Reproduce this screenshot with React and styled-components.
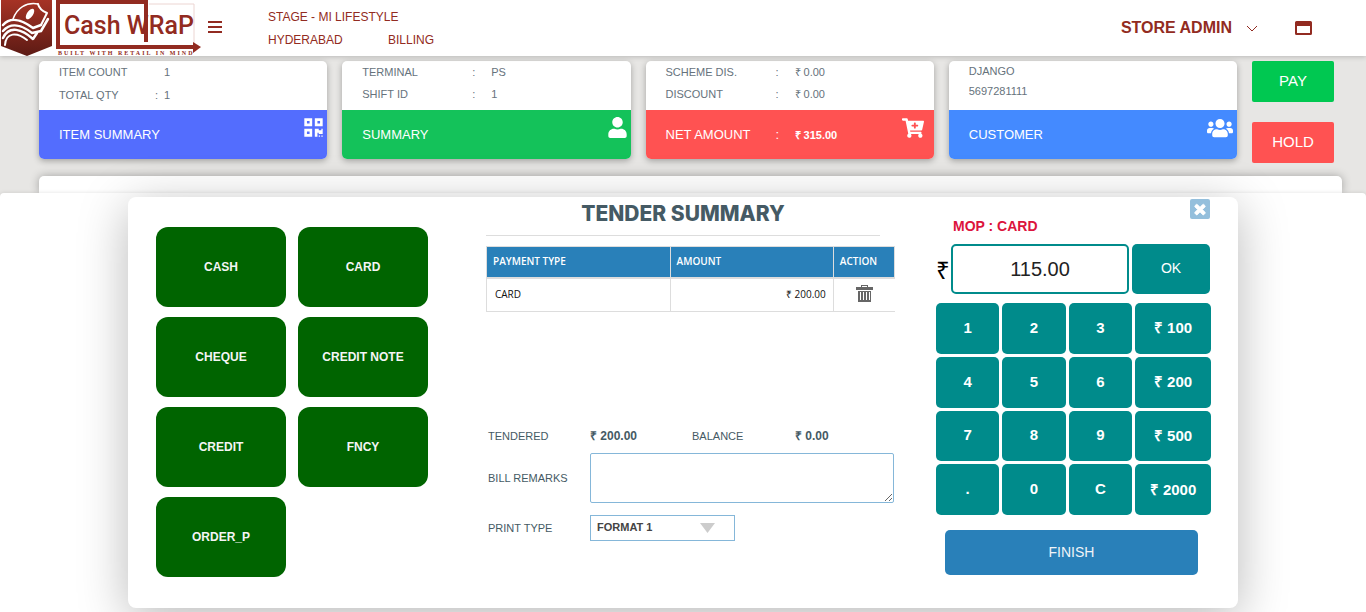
import React, { useState } from "react";
import styled, { createGlobalStyle } from "styled-components";
import { FaQrcode, FaUser, FaCartPlus, FaUsers } from "react-icons/fa";

const sans = `"Liberation Sans", Arial, sans-serif`;
const brand = "#922b21";
const teal = "#008b8b";
const blue = "#2980b9";
const slate = "#455a64";

const GlobalStyle = createGlobalStyle`
  * { box-sizing: border-box; }
  body { margin: 0; background: #e7e6e4; font-family: ${sans}; }
  button, input, select, textarea { font-family: inherit; margin: 0; }
  button { border: 0; padding: 0; cursor: pointer; }
`;

const Page = styled.div`
  overflow: hidden;
`;

const Header = styled.header`
  position: relative;
  z-index: 1;
  display: flex;
  align-items: center;
  height: 56px;
  padding-right: 54px;
  background: #fff;
  color: ${brand};
  box-shadow: 0 1px 5px rgba(0, 0, 0, 0.2);
`;

const Logo = styled.svg`
  display: block;
  flex: none;
`;

const IconButton = styled.button`
  display: flex;
  background: none;
  color: inherit;
`;

const StoreInfo = styled.div`
  display: grid;
  grid-template-columns: 120px auto;
  margin: 0 auto 0 46px;
  padding-top: 2px;
  font-size: 12px;
  line-height: 23px;
`;

const StoreName = styled.span`
  grid-column: 1 / -1;
`;

const UserMenu = styled.button`
  display: flex;
  align-items: center;
  gap: 14px;
  margin-right: 37px;
  background: none;
  color: inherit;
  font-size: 16px;
  font-weight: 700;
`;

const Dashboard = styled.section`
  display: flex;
  gap: 15px;
  padding: 5px 32px 0 39px;
`;

const Cards = styled.div`
  flex: 1;
  display: grid;
  grid-template-columns: repeat(4, 1fr);
  align-items: start;
  gap: 15px;
`;

const Card = styled.article`
  border-radius: 5px;
  overflow: hidden;
  background: #fff;
  box-shadow: 0 2px 6px rgba(0, 0, 0, 0.3);
`;

const CardBody = styled.div`
  height: 49px;
  padding-left: 20px;
  color: #66727c;
  font-size: 11px;
  line-height: ${(p) => p.$line}px;
`;

const CardRow = styled.div`
  display: grid;
  grid-template-columns: ${(p) => (p.$compact ? "96px 9px auto" : "110px 19px auto")};
`;

const CardFooter = styled.div`
  display: flex;
  justify-content: space-between;
  height: 49px;
  padding: 7px ${(p) => p.$inset}px 0 20px;
  background: ${(p) => p.$color};
  color: #fff;
  font-size: 13px;
  line-height: 36px;
`;

const NetValue = styled.strong`
  font-size: 11px;
`;

const SideActions = styled.div`
  display: flex;
  flex-direction: column;
  gap: 20px;
  width: 82px;
`;

const SideButton = styled.button`
  height: 41px;
  padding-bottom: 2px;
  border-radius: 2px;
  background: ${(p) => p.$color};
  color: #fff;
  font-size: 15px;
`;

const Panel = styled.div`
  height: 17px;
  margin: 13px 24px 0 39px;
  border-radius: 5px 5px 0 0;
  background: #fff;
  box-shadow: 0 0 10px rgba(0, 0, 0, 0.3);
`;

const Sheet = styled.main`
  position: relative;
  padding: 4px 128px;
  border-radius: 4px 4px 0 0;
  background: #fff;
  box-shadow: 0 0 4px rgba(0, 0, 0, 0.12);
`;

const Modal = styled.section`
  display: grid;
  grid-template-columns: 272px minmax(409px, 1fr) 275px;
  padding: 0 27px 31px 28px;
  border-radius: 8px;
  background: #fff;
  box-shadow: 0 10px 50px rgba(0, 0, 0, 0.28);
`;

const Methods = styled.div`
  display: grid;
  grid-template-columns: 1fr 1fr;
  grid-auto-rows: 80px;
  gap: 10px 12px;
  padding-top: 30px;
`;

const MethodButton = styled.button`
  border-radius: 12px;
  background: #006400;
  color: #f5f5f5;
  font-size: 12px;
  font-weight: 700;
`;

const Summary = styled.div`
  margin: 0 41px 0 58px;
`;

const Title = styled.h1`
  margin: 0 15px 10px 0;
  padding-bottom: 4px;
  border-bottom: 1px solid #ddd;
  color: ${slate};
  font-family: Inter, ${sans};
  font-size: 21px;
  font-weight: 800;
  line-height: 34px;
  text-align: center;
`;

const TenderArea = styled.div`
  min-height: 180px;
`;

const TenderTable = styled.table`
  width: 100%;
  border-collapse: collapse;
  table-layout: fixed;
  font-family: "Open Sans", ${sans};
  font-size: 10px;
  color: #111;
`;

const HeadCell = styled.th`
  width: ${(p) => p.$width};
  height: 31px;
  padding: 0 6px 2px;
  border: 1px solid #ddd;
  border-bottom-width: 2px;
  background: ${blue};
  color: #fff;
  font-weight: 600;
  text-align: left;
`;

const Cell = styled.td`
  height: 34px;
  padding: 0 7px 2px 8px;
  border: solid #ddd;
  border-width: 0 0 1px 1px;
  text-align: ${(p) => p.$align || "left"};
`;

const DeleteButton = styled(IconButton)`
  margin: 0 auto;
  color: #666;
`;

const Fields = styled.div`
  display: grid;
  grid-template-columns: 102px 102px 103px 1fr;
  align-items: center;
  padding: 0 1px 0 2px;
  color: ${slate};
  font-size: 11px;
  line-height: 20px;
`;

const Amount = styled.strong`
  font-size: 12px;
`;

const FieldLabel = styled.label`
  padding-top: ${(p) => p.$gap}px;
`;

const Wide = styled.div`
  grid-column: 2 / -1;
  display: flex;
  padding-top: ${(p) => p.$gap}px;
`;

const Remarks = styled.textarea`
  width: 100%;
  height: 50px;
  border: 1px solid #85b7d9;
  border-radius: 2px;
`;

const SelectBox = styled.div`
  position: relative;
  width: 145px;
`;

const Select = styled.select`
  appearance: none;
  display: block;
  width: 100%;
  height: 26px;
  padding: 0 6px 2px;
  border: 1px solid #85b7d9;
  border-radius: 0;
  background: #fff;
  color: #444;
  font-size: 11px;
  font-weight: 700;
`;

const SelectArrow = styled.svg`
  position: absolute;
  top: 8px;
  right: 20px;
  pointer-events: none;
`;

const Pad = styled.div`
  display: flex;
  flex-direction: column;
`;

const CloseButton = styled.button`
  display: grid;
  place-items: center;
  align-self: flex-end;
  width: 20px;
  height: 20px;
  margin: 2px 1px 0 0;
  border-radius: 2px;
  background: #94bfdc;
  color: #fff;
`;

const Mop = styled.label`
  margin: 0 0 11px 17px;
  color: #dc143c;
  font-size: 14px;
  font-weight: 700;
  line-height: 14px;
`;

const Entry = styled.div`
  display: grid;
  grid-template-columns: 15px 1fr 78px;
  align-items: center;
  height: 50px;
  margin-right: 1px;
`;

const Rupee = styled.span`
  font-size: 24px;
`;

const AmountInput = styled.input`
  width: 100%;
  height: 50px;
  border: 2px solid ${teal};
  border-radius: 5px;
  color: #222;
  font-size: 20px;
  text-align: center;
`;

const EntryField = styled.div`
  padding-right: 3px;
`;

const KeyButton = styled.button`
  padding-bottom: 2px;
  border-radius: 5px;
  background: ${teal};
  color: #fff;
  font-size: 15px;
  font-weight: 700;
`;

const OkButton = styled(KeyButton)`
  height: 50px;
  font-size: 14px;
  font-weight: 400;
`;

const Keypad = styled.div`
  display: grid;
  grid-template-columns: 5fr 5fr 5fr 6fr;
  grid-template-rows: repeat(4, 1fr);
  gap: 3px;
  height: 212px;
  margin: 9px 0 15px;
`;

const FinishButton = styled.button`
  height: 45px;
  padding-bottom: 2px;
  margin: 0 13px 0 9px;
  border-radius: 5px;
  background: ${blue};
  color: #f0f4f8;
  font-size: 14px;
`;

const methods = ["CASH", "CARD", "CHEQUE", "CREDIT NOTE", "CREDIT", "FNCY", "ORDER_P"];
const keys = ["1", "2", "3", "₹ 100", "4", "5", "6", "₹ 200", "7", "8", "9", "₹ 500", ".", "0", "C", "₹ 2000"];

function BrandLogo() {
  return (
    <Logo width="204" height="56" viewBox="0 0 204 56" role="img" aria-label="Cash Wrap">
      <defs>
        <linearGradient id="shield" x1="0" y1="0" x2="0" y2="1">
          <stop offset="0" stopColor="#a63325" />
          <stop offset="1" stopColor="#5c1a14" />
        </linearGradient>
      </defs>
      <path d="M1 0h51v46L27 56 1 46z" fill="url(#shield)" />
      <g fill="none" stroke="#fff" strokeLinecap="round" strokeLinejoin="round">
        <path d="M13 19C17 8 26 2 38 4" strokeWidth="1.500" />
        <path d="M38 4c1 4 4 7 9 9l-6 12" strokeWidth="2" />
        <path d="M3 25c7-8 18-6 30 3l8-3" strokeWidth="2.500" />
        <path d="M3 31c8-9 19-6 29 2l9-2 7-12" strokeWidth="2.500" />
        <path d="M3 38c6-13 19-9 30 1l4-6" strokeWidth="2.500" />
        <path d="M5 45c1-13 12-13 22-5" strokeWidth="2" />
      </g>
      <ellipse cx="30" cy="14" rx="3" ry="6" fill="#fff" transform="rotate(35 30 14)" />
      <path d="M149 4h45v39" fill="none" stroke="#ecd5d2" />
      <path d="M146 42V2H58v45h136" fill="none" stroke={brand} strokeWidth="4" />
      <path d="M193 42l8 5-8 6z" fill={brand} />
      <text x="64" y="34" fontFamily='Roboto, "Liberation Sans", sans-serif' fontSize="25" fontWeight="500" fill={brand}>
        Cash WRaP
      </text>
      <text x="58" y="55" fontFamily='"Liberation Serif", serif' fontSize="6" fontWeight="700" letterSpacing="2" fill={brand}>
        BUILT WITH RETAIL IN MIND
      </text>
    </Logo>
  );
}

function Row({ label, value, colon = ":", compact }) {
  return (
    <CardRow $compact={compact}>
      <span>{label}</span>
      <span>{colon}</span>
      <span>{value}</span>
    </CardRow>
  );
}

export default function App() {
  const [amount, setAmount] = useState("115.00");
  const [remarks, setRemarks] = useState("");

  return (
    <Page>
      <GlobalStyle />
      <Header>
        <BrandLogo />
        <IconButton aria-label="Menu">
          <svg width="18" height="14" viewBox="0 0 18 14" fill="currentColor">
            <path d="M4 0h14v2H4zM4 5h14v2H4zM4 10h14v2H4z" />
          </svg>
        </IconButton>
        <StoreInfo>
          <StoreName>STAGE - MI LIFESTYLE</StoreName>
          <span>HYDERABAD</span>
          <span>BILLING</span>
        </StoreInfo>
        <UserMenu>
          STORE ADMIN
          <svg width="12" height="8" viewBox="0 0 12 8" fill="none" stroke="currentColor">
            <path d="M1 2l5 5 5-5" />
          </svg>
        </UserMenu>
        <IconButton aria-label="Window">
          <svg width="17" height="14" viewBox="0 0 17 14" fill="currentColor" fillRule="evenodd">
            <path d="M1.500 0h14a1.500 1.500 0 0 1 1.500 1.500v11a1.500 1.500 0 0 1-1.500 1.500h-14A1.500 1.500 0 0 1 0 12.500v-11A1.500 1.500 0 0 1 1.500 0zM2 5v7h13V5z" />
          </svg>
        </IconButton>
      </Header>

      <Dashboard>
        <Cards>
          <Card>
            <CardBody $line={23}>
              <Row label="ITEM COUNT" colon="" value="1" compact />
              <Row label="TOTAL QTY" value="1" compact />
            </CardBody>
            <CardFooter $color="#536dfe" $inset={3}>
              ITEM SUMMARY
              <FaQrcode size={21} />
            </CardFooter>
          </Card>
          <Card>
            <CardBody $line={22}>
              <Row label="TERMINAL" value="PS" />
              <Row label="SHIFT ID" value="1" />
            </CardBody>
            <CardFooter $color="#14c25a" $inset={3}>
              SUMMARY
              <FaUser size={21} />
            </CardFooter>
          </Card>
          <Card>
            <CardBody $line={22}>
              <Row label="SCHEME DIS." value="₹ 0.00" />
              <Row label="DISCOUNT" value="₹ 0.00" />
            </CardBody>
            <CardFooter $color="#ff5252" $inset={10}>
              <Row label="NET AMOUNT" value={<NetValue>₹ 315.00</NetValue>} />
              <FaCartPlus size={22} />
            </CardFooter>
          </Card>
          <Card>
            <CardBody $line={20}>
              <div>DJANGO</div>
              <div>5697281111</div>
            </CardBody>
            <CardFooter $color="#448aff" $inset={4}>
              CUSTOMER
              <FaUsers size={26} viewBox="0 48 640 512" />
            </CardFooter>
          </Card>
        </Cards>
        <SideActions>
          <SideButton $color="#00c851">PAY</SideButton>
          <SideButton $color="#ff5252">HOLD</SideButton>
        </SideActions>
      </Dashboard>
      <Panel />

      <Sheet>
        <Modal>
          <Methods>
            {methods.map((m) => (
              <MethodButton key={m}>{m}</MethodButton>
            ))}
          </Methods>

          <Summary>
            <Title>TENDER SUMMARY</Title>
            <TenderArea>
              <TenderTable>
                <thead>
                  <tr>
                    <HeadCell $width="45%">PAYMENT TYPE</HeadCell>
                    <HeadCell $width="40%">AMOUNT</HeadCell>
                    <HeadCell $width="15%">ACTION</HeadCell>
                  </tr>
                </thead>
                <tbody>
                  <tr>
                    <Cell>CARD</Cell>
                    <Cell $align="right">₹ 200.00</Cell>
                    <Cell>
                      <DeleteButton aria-label="Delete">
                        <svg width="17" height="17" viewBox="0 0 17 17" fill="currentColor" fillRule="evenodd">
                          <path d="M5 0h7v2h5v3H0V2h5zM6 1v1h5V1zM2 6h13v11H2zM4 7v8h1V7zM7 7v8h1V7zM10 7v8h1V7zM13 7v8h1V7z" />
                        </svg>
                      </DeleteButton>
                    </Cell>
                  </tr>
                </tbody>
              </TenderTable>
            </TenderArea>
            <Fields>
              <span>TENDERED</span>
              <Amount>₹ 200.00</Amount>
              <span>BALANCE</span>
              <Amount>₹ 0.00</Amount>
              <FieldLabel htmlFor="remarks" $gap={7}>BILL REMARKS</FieldLabel>
              <Wide $gap={7}>
                <Remarks id="remarks" value={remarks} onChange={(e) => setRemarks(e.target.value)} />
              </Wide>
              <FieldLabel htmlFor="print-type" $gap={12}>PRINT TYPE</FieldLabel>
              <Wide $gap={12}>
                <SelectBox>
                  <Select id="print-type">
                    <option>FORMAT 1</option>
                  </Select>
                  <SelectArrow width="15" height="10" viewBox="0 0 15 10" fill="#ccc">
                    <path d="M0 0h15L7.500 10z" />
                  </SelectArrow>
                </SelectBox>
              </Wide>
            </Fields>
          </Summary>

          <Pad>
            <CloseButton aria-label="Close">
              <svg width="16" height="16" viewBox="0 0 1792 1792" fill="currentColor" stroke="currentColor" strokeWidth="80">
                <path d="M1490 1322q0 40-28 68l-136 136q-28 28-68 28t-68-28l-294-294-294 294q-28 28-68 28t-68-28l-136-136q-28-28-28-68t28-68l294-294-294-294q-28-28-28-68t28-68l136-136q28-28 68-28t68 28l294 294 294-294q28-28 68-28t68 28l136 136q28 28 28 68t-28 68l-294 294 294 294q28 28 28 68z" />
              </svg>
            </CloseButton>
            <Mop htmlFor="amount">MOP : CARD</Mop>
            <Entry>
              <Rupee>₹</Rupee>
              <EntryField>
                <AmountInput id="amount" value={amount} onChange={(e) => setAmount(e.target.value)} />
              </EntryField>
              <OkButton>OK</OkButton>
            </Entry>
            <Keypad>
              {keys.map((k) => (
                <KeyButton key={k}>{k}</KeyButton>
              ))}
            </Keypad>
            <FinishButton>FINISH</FinishButton>
          </Pad>
        </Modal>
      </Sheet>
    </Page>
  );
}
